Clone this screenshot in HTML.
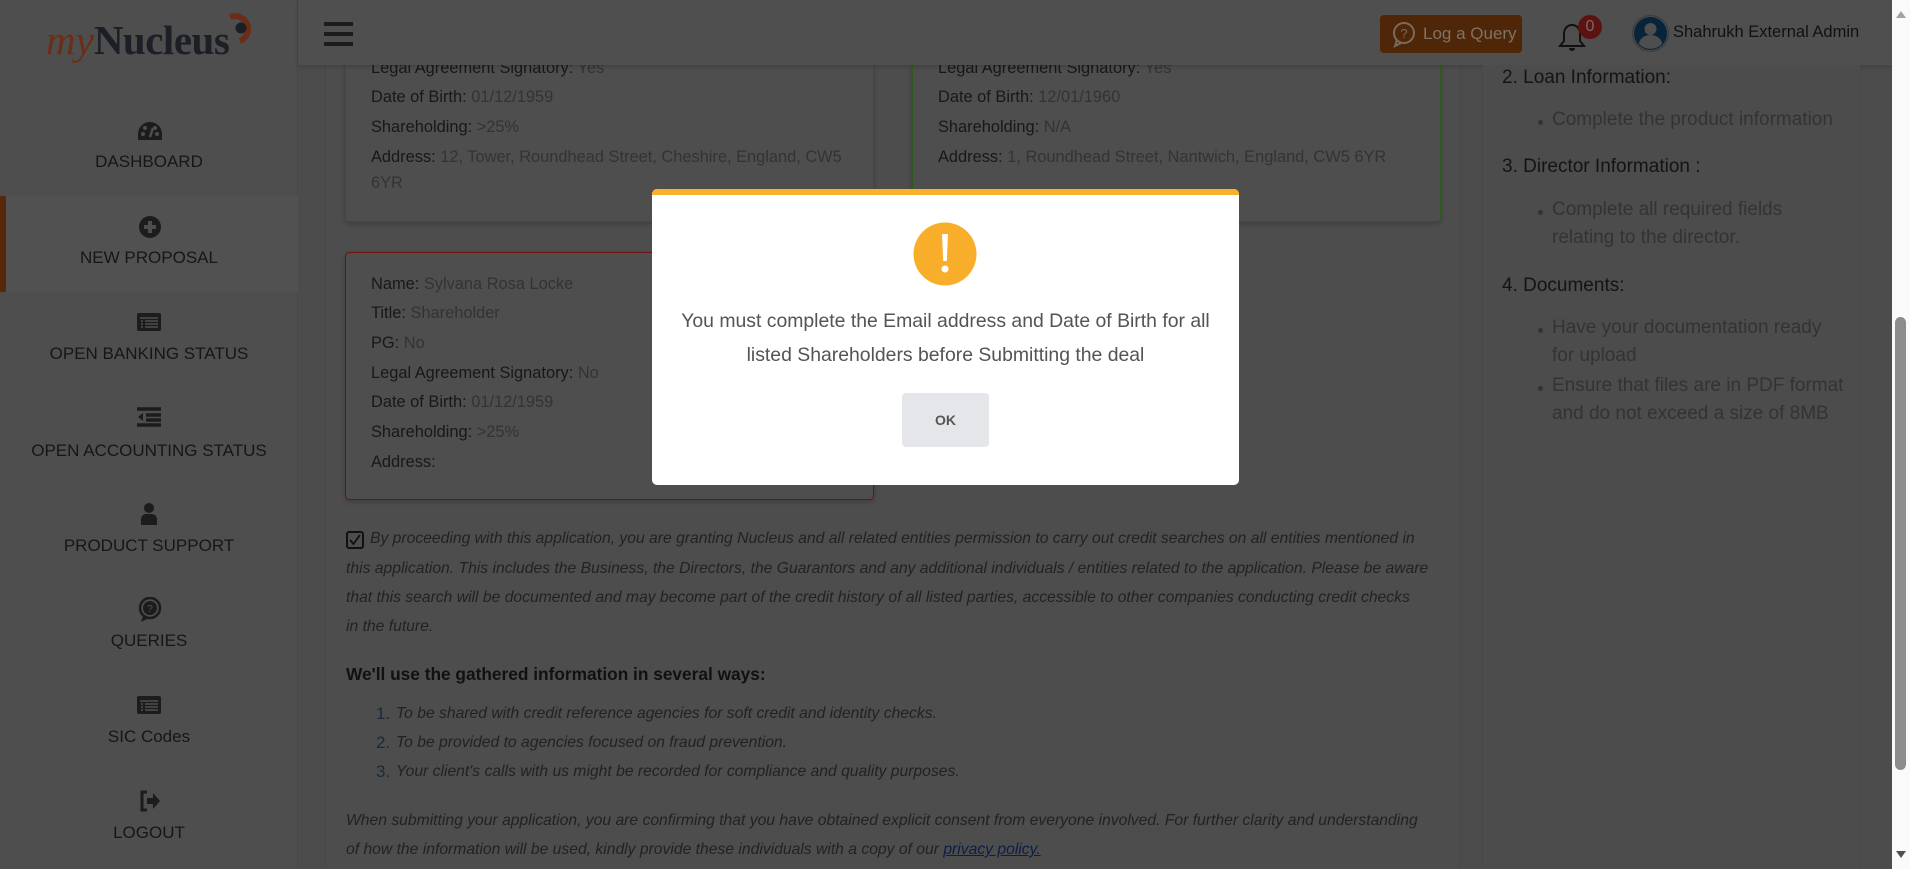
<!DOCTYPE html>
<html><head><meta charset="utf-8"><style>
*{margin:0;padding:0;box-sizing:border-box}
body{width:1910px;height:869px;overflow:hidden;background:#4c4c4c;font-family:"Liberation Sans",Arial,sans-serif;position:relative}
.a{position:absolute;white-space:nowrap}
.side{position:absolute;left:0;top:0;width:298px;height:869px;background:#4e4e4e;border-right:1px solid #474747}
.nav{position:absolute;left:0;width:298px;text-align:center;font-size:17px;color:#161616}
.hdr{position:absolute;left:298px;top:0;width:1594px;height:65px;background:#4f4f4f;box-shadow:0 2px 4px rgba(0,0,0,.15)}
.card{position:absolute;border:1px solid #2f5a1e;border-radius:4px;background:#4e4e4e;box-shadow:0 2px 5px rgba(0,0,0,.2)}
.ct{position:absolute;font-size:16.4px;color:#181818;white-space:nowrap}
.ct span{color:#333}
.it{position:absolute;font-size:15.7px;font-style:italic;color:#222;white-space:nowrap}
.rp{position:absolute;font-size:19px;white-space:nowrap}
.h{color:#141414}
.b{color:#333}
.dot{position:absolute;width:5px;height:5px;border-radius:50%;background:#333}
</style></head><body>
<div class="side"></div>
<div class="a" style="left:0;top:196px;width:298px;height:96px;background:#515151"></div>
<div class="a" style="left:0;top:196px;width:6px;height:96px;background:#56280b"></div>
<div class="a" style="left:46px;top:14px;font-family:'Liberation Serif',serif;font-size:41px;line-height:52px"><span style="font-style:italic;color:#6a2d16">my</span><span style="font-weight:bold;color:#1c1f26;letter-spacing:-0.5px">Nucleus</span></div>
<svg class="a" style="left:224px;top:11px" width="34" height="34" viewBox="0 0 34 34"><path d="M6 6 A13 13 0 1 1 16 30" fill="none" stroke="#6a2d16" stroke-width="6"/><circle cx="17" cy="17" r="5.5" fill="#1c1f26"/></svg>

<svg class="a" style="left:137px;top:121px" width="26" height="22" viewBox="0 0 26 22"><path d="M13 1A12 12 0 0 0 1 13v6h24v-6A12 12 0 0 0 13 1z" fill="#1c1c1c"/><circle cx="6" cy="13" r="2" fill="#4e4e4e"/><circle cx="8" cy="7" r="2" fill="#4e4e4e"/><circle cx="18" cy="7" r="2" fill="#4e4e4e"/><circle cx="20" cy="13" r="2" fill="#4e4e4e"/><path d="M13 16l3-9" stroke="#4e4e4e" stroke-width="2.5"/></svg>
<div class="nav" style="top:152px">DASHBOARD</div>
<svg class="a" style="left:139px;top:216px" width="22" height="22" viewBox="0 0 22 22"><circle cx="11" cy="11" r="11" fill="#1c1c1c"/><path d="M11 5v12M5 11h12" stroke="#4e4e4e" stroke-width="4"/></svg>
<div class="nav" style="top:248px">NEW PROPOSAL</div>
<svg class="a" style="left:136px;top:312px" width="26" height="20" viewBox="0 0 26 20"><rect x="1" y="1" width="24" height="18" rx="2" fill="#1c1c1c"/><path d="M4 6h18M5 9h2M9 9h13M5 12h2M9 12h13M5 15h2M9 15h13" stroke="#4e4e4e" stroke-width="1.5"/></svg>
<div class="nav" style="top:344px">OPEN BANKING STATUS</div>
<svg class="a" style="left:136px;top:407px" width="26" height="20" viewBox="0 0 26 20"><path d="M1 2h24M10 8h15M10 13h15M1 18h24" stroke="#1c1c1c" stroke-width="3.5"/><path d="M7 6v8l-5-4z" fill="#1c1c1c"/></svg>
<div class="nav" style="top:441px">OPEN ACCOUNTING STATUS</div>
<svg class="a" style="left:140px;top:503px" width="18" height="22" viewBox="0 0 18 22"><circle cx="9" cy="5" r="5" fill="#1c1c1c"/><path d="M1 22v-6a5 5 0 0 1 5-5h6a5 5 0 0 1 5 5v6z" fill="#1c1c1c"/></svg>
<div class="nav" style="top:536px">PRODUCT SUPPORT</div>
<svg class="a" style="left:138px;top:597px" width="24" height="26" viewBox="0 0 24 26"><circle cx="12" cy="11" r="10" fill="none" stroke="#1c1c1c" stroke-width="2.5"/><circle cx="12" cy="11" r="7" fill="#1c1c1c"/><path d="M5 19l-2 6 6-3" fill="#1c1c1c"/><text x="12" y="15" font-size="10" text-anchor="middle" fill="#4e4e4e" font-family="Liberation Sans">?</text></svg>
<div class="nav" style="top:631px">QUERIES</div>
<svg class="a" style="left:136px;top:695px" width="26" height="20" viewBox="0 0 26 20"><rect x="1" y="1" width="24" height="18" rx="2" fill="#1c1c1c"/><path d="M4 6h18M5 9h2M9 9h13M5 12h2M9 12h13M5 15h2M9 15h13" stroke="#4e4e4e" stroke-width="1.5"/></svg>
<div class="nav" style="top:727px">SIC Codes</div>
<svg class="a" style="left:139px;top:790px" width="22" height="22" viewBox="0 0 22 22"><path d="M8 2H3v18h5" fill="none" stroke="#1c1c1c" stroke-width="3"/><path d="M8 8h6V3l7 8-7 8v-5H8z" fill="#1c1c1c"/></svg>
<div class="nav" style="top:823px">LOGOUT</div>

<div class="a" style="left:325px;top:65px;width:1136px;height:804px;background:#4d4d4d;border-left:1px solid #484848;border-right:1px solid #484848"></div>

<div class="card" style="left:345px;top:40px;width:529px;height:182px"></div>
<div class="ct" style="left:371px;top:59px">Legal Agreement Signatory: <span>Yes</span></div>
<div class="ct" style="left:371px;top:88px">Date of Birth: <span>01/12/1959</span></div>
<div class="ct" style="left:371px;top:118px">Shareholding: <span>&gt;25%</span></div>
<div class="ct" style="left:371px;top:148px">Address: <span>12, Tower, Roundhead Street, Cheshire, England, CW5</span></div>
<div class="ct" style="left:371px;top:174px"><span>6YR</span></div>

<div class="card" style="left:912px;top:40px;width:529px;height:182px"></div>
<div class="ct" style="left:938px;top:59px">Legal Agreement Signatory: <span>Yes</span></div>
<div class="ct" style="left:938px;top:88px">Date of Birth: <span>12/01/1960</span></div>
<div class="ct" style="left:938px;top:118px">Shareholding: <span>N/A</span></div>
<div class="ct" style="left:938px;top:148px">Address: <span>1, Roundhead Street, Nantwich, England, CW5 6YR</span></div>

<div class="card" style="left:345px;top:252px;width:529px;height:248px;border-color:#6e1313"></div>
<div class="ct" style="left:371px;top:275px">Name: <span>Sylvana Rosa Locke</span></div>
<div class="ct" style="left:371px;top:304px">Title: <span>Shareholder</span></div>
<div class="ct" style="left:371px;top:334px">PG: <span>No</span></div>
<div class="ct" style="left:371px;top:364px">Legal Agreement Signatory: <span>No</span></div>
<div class="ct" style="left:371px;top:393px">Date of Birth: <span>01/12/1959</span></div>
<div class="ct" style="left:371px;top:423px">Shareholding: <span>&gt;25%</span></div>
<div class="ct" style="left:371px;top:453px">Address:</div>

<div class="hdr"></div>
<div class="a" style="left:324px;top:22px;width:29px;height:4px;background:#1c1c1c"></div>
<div class="a" style="left:324px;top:32px;width:29px;height:4px;background:#1c1c1c"></div>
<div class="a" style="left:324px;top:42px;width:29px;height:4px;background:#1c1c1c"></div>
<div class="a" style="left:1380px;top:15px;width:142px;height:38px;background:#4f2608;border-radius:4px"></div>
<svg class="a" style="left:1392px;top:22px" width="24" height="26" viewBox="0 0 24 26"><circle cx="12" cy="11" r="10" fill="none" stroke="#7a6a5e" stroke-width="2"/><path d="M5 18l-2 6 6-3" fill="none" stroke="#7a6a5e" stroke-width="2"/><text x="12" y="16" font-size="13" text-anchor="middle" fill="#7a6a5e" font-family="Liberation Sans">?</text></svg>
<div class="a" style="left:1423px;top:24px;font-size:17px;color:#7f7266">Log a Query</div>
<svg class="a" style="left:1558px;top:22px" width="28" height="32" viewBox="0 0 28 32"><path d="M14 3c-5 0-8 4-8 9v7l-4 5h24l-4-5v-7c0-5-3-9-8-9z" fill="none" stroke="#111" stroke-width="2"/><path d="M11 26a3 3 0 0 0 6 0" fill="#111"/></svg>
<div class="a" style="left:1578px;top:15px;width:24px;height:24px;border-radius:50%;background:#5d1212;color:#7a6a6a;font-size:16px;text-align:center;line-height:24px">0</div>
<div class="a" style="left:1632px;top:15px;width:37px;height:37px;border-radius:50%;background:#4a4a4a;border:1px solid #3b3b3b"></div>
<svg class="a" style="left:1634px;top:17px" width="33" height="33" viewBox="0 0 33 33"><circle cx="16.5" cy="16.5" r="16.5" fill="#08243a"/><circle cx="16.5" cy="12" r="6" fill="#4e4e4e"/><path d="M5 27a11.5 9 0 0 1 23 0a16 16 0 0 1-23 0z" fill="#4e4e4e"/></svg>
<div class="a" style="left:1673px;top:23px;font-size:16.5px;color:#111">Shahrukh External Admin</div>

<div class="a" style="left:346px;top:531px;width:18px;height:18px;border:2px solid #111;border-radius:3px"></div>
<svg class="a" style="left:348px;top:533px" width="14" height="14" viewBox="0 0 14 14"><path d="M2 7l3.5 4L12 2" fill="none" stroke="#111" stroke-width="1.8"/></svg>
<div class="it" style="left:370px;top:530px">By proceeding with this application, you are granting Nucleus and all related entities permission to carry out credit searches on all entities mentioned in</div>
<div class="it" style="left:346px;top:560px">this application. This includes the Business, the Directors, the Guarantors and any additional individuals / entities related to the application. Please be aware</div>
<div class="it" style="left:346px;top:589px">that this search will be documented and may become part of the credit history of all listed parties, accessible to other companies conducting credit checks</div>
<div class="it" style="left:346px;top:618px">in the future.</div>
<div class="a" style="left:346px;top:664px;font-size:17.3px;font-weight:bold;color:#111">We'll use the gathered information in several ways:</div>
<div class="a" style="left:376px;top:704px;font-size:17px;color:#1a2a3a">1.</div>
<div class="it" style="left:396px;top:705px">To be shared with credit reference agencies for soft credit and identity checks.</div>
<div class="a" style="left:376px;top:733px;font-size:17px;color:#1a2a3a">2.</div>
<div class="it" style="left:396px;top:734px">To be provided to agencies focused on fraud prevention.</div>
<div class="a" style="left:376px;top:762px;font-size:17px;color:#1a2a3a">3.</div>
<div class="it" style="left:396px;top:763px">Your client's calls with us might be recorded for compliance and quality purposes.</div>
<div class="it" style="left:346px;top:812px">When submitting your application, you are confirming that you have obtained explicit consent from everyone involved. For further clarity and understanding</div>
<div class="it" style="left:346px;top:841px">of how the information will be used, kindly provide these individuals with a copy of our <span style="color:#0b1e4a;text-decoration:underline">privacy policy.</span></div>

<div class="a" style="left:1482px;top:65px;width:379px;height:804px;background:#4c4c4c;border-left:1px solid #474747;border-right:1px solid #474747"></div>
<div class="rp h" style="left:1502px;top:67px">2. Loan Information:</div>
<div class="dot" style="left:1538px;top:120px"></div><div class="rp b" style="left:1552px;top:109px">Complete the product information</div>
<div class="rp h" style="left:1502px;top:156px">3. Director Information :</div>
<div class="dot" style="left:1538px;top:210px"></div><div class="rp b" style="left:1552px;top:199px">Complete all required fields</div>
<div class="rp b" style="left:1552px;top:227px">relating to the director.</div>
<div class="rp h" style="left:1502px;top:275px">4. Documents:</div>
<div class="dot" style="left:1538px;top:328px"></div><div class="rp b" style="left:1552px;top:317px">Have your documentation ready</div>
<div class="rp b" style="left:1552px;top:345px">for upload</div>
<div class="dot" style="left:1538px;top:386px"></div><div class="rp b" style="left:1552px;top:375px">Ensure that files are in PDF format</div>
<div class="rp b" style="left:1552px;top:403px">and do not exceed a size of 8MB</div>

<div class="a" style="left:1892px;top:0;width:18px;height:869px;background:#fafafa"></div>
<svg class="a" style="left:1895px;top:9px" width="12" height="10"><path d="M1 9L6 2l5 7z" fill="#a3a3a3"/></svg>
<svg class="a" style="left:1895px;top:850px" width="12" height="10"><path d="M1 1l5 7 5-7z" fill="#505050"/></svg>
<div class="a" style="left:1895px;top:317px;width:11px;height:453px;background:#8c8c8c;border-radius:6px"></div>

<div class="a" style="left:652px;top:189px;width:587px;height:296px;background:#fff;border-radius:5px;overflow:hidden">
  <div style="height:6px;background:#f9b02b"></div>
</div>
<svg class="a" style="left:913px;top:222px" width="64" height="64" viewBox="0 0 64 64"><circle cx="32" cy="32" r="31.5" fill="#f8ae2b"/><path d="M29 12h6l-1.2 27h-3.6z" fill="#fff"/><circle cx="32" cy="47" r="3.5" fill="#fff"/></svg>
<div class="a" style="left:652px;top:310px;width:587px;text-align:center;font-size:19.4px;color:#545454">You must complete the Email address and Date of Birth for all</div>
<div class="a" style="left:652px;top:344px;width:587px;text-align:center;font-size:19.4px;color:#545454">listed Shareholders before Submitting the deal</div>
<div class="a" style="left:902px;top:393px;width:87px;height:54px;background:#e4e6ea;border-radius:4px;text-align:center;line-height:54px;font-size:14px;font-weight:bold;color:#555">OK</div>
</body></html>
